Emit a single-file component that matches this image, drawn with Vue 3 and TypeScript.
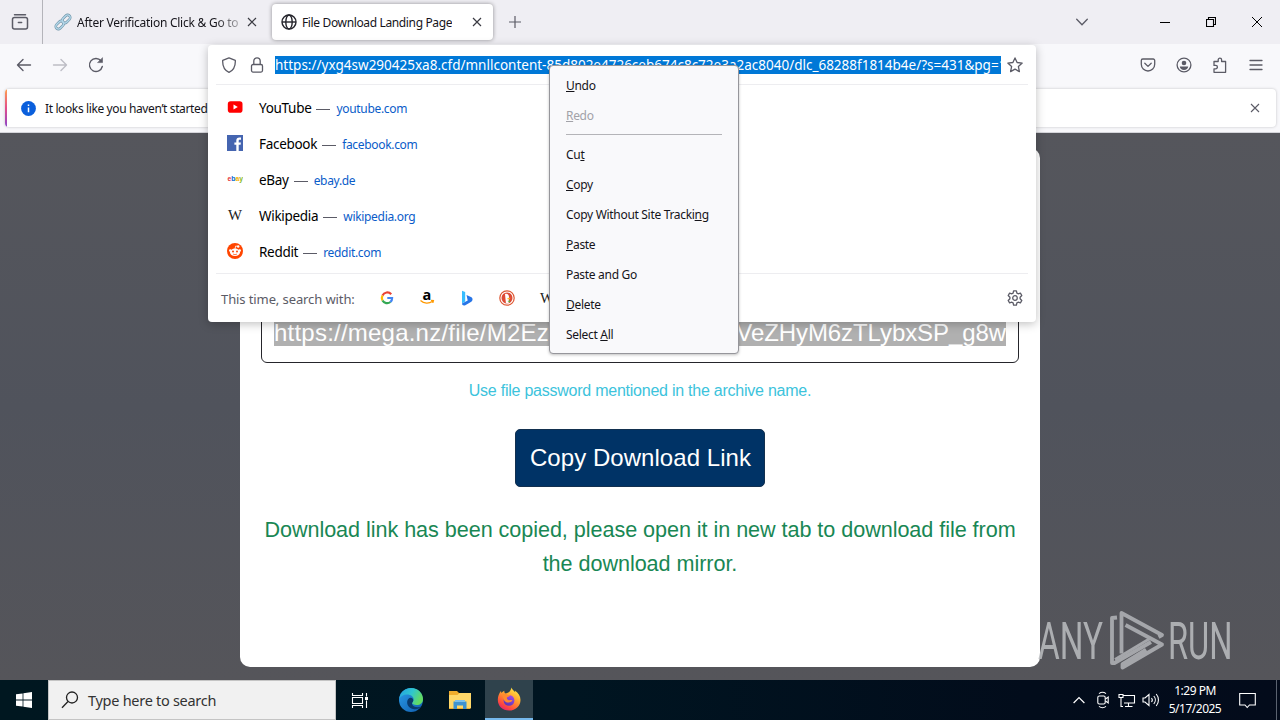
<script setup lang="ts">
interface Site {
  id: string
  name: string
  host: string
}

interface MenuEntry {
  before: string
  key: string
  after: string
  disabled?: boolean
  divider?: boolean
}

const sites: Site[] = [
  { id: 'youtube', name: 'YouTube', host: 'youtube.com' },
  { id: 'facebook', name: 'Facebook', host: 'facebook.com' },
  { id: 'ebay', name: 'eBay', host: 'ebay.de' },
  { id: 'wikipedia', name: 'Wikipedia', host: 'wikipedia.org' },
  { id: 'reddit', name: 'Reddit', host: 'reddit.com' },
]

const menu: MenuEntry[] = [
  { before: '', key: 'U', after: 'ndo' },
  { before: '', key: 'R', after: 'edo', disabled: true, divider: true },
  { before: 'Cu', key: 't', after: '' },
  { before: '', key: 'C', after: 'opy' },
  { before: 'Copy Without Site Tracki', key: 'n', after: 'g' },
  { before: '', key: 'P', after: 'aste' },
  { before: 'Paste and Go', key: '', after: '' },
  { before: '', key: 'D', after: 'elete' },
  { before: 'Select ', key: 'A', after: 'll' },
]
</script>

<template>
  <div class="screen">
    <header class="tabs">
      <div class="view">
        <svg width="18" height="18" viewBox="0 0 18 18" fill="none" stroke="#5b5b66" stroke-width="1.5" stroke-linecap="round">
          <path d="M3.500 1.700h11" /><rect x="1.500" y="4.500" width="15" height="11.500" rx="2" /><path d="M7.400 9.500h3.200" />
        </svg>
      </div>
      <div class="tab first">
        <svg class="chain" width="18" height="18" viewBox="0 0 18 18" fill="none" stroke-linecap="round">
          <g stroke="#6f94a8" stroke-width="2.6"><rect x="-4.6" y="-2.6" width="9.2" height="5.2" rx="2.6" transform="translate(5.8 12) rotate(-45)" /><rect x="-4.6" y="-2.6" width="9.2" height="5.2" rx="2.6" transform="translate(12.2 6) rotate(-45)" /></g>
          <g stroke="#b4d8ea" stroke-width="1.3"><rect x="-4.6" y="-2.6" width="9.2" height="5.2" rx="2.6" transform="translate(5.8 12) rotate(-45)" /><rect x="-4.6" y="-2.6" width="9.2" height="5.2" rx="2.6" transform="translate(12.2 6) rotate(-45)" /></g>
        </svg>
        <span class="title faded">After Verification Click &amp; Go to</span>
        <svg class="x" width="10" height="10" viewBox="0 0 10 10" stroke="#3b3b43" stroke-width="1.2"><path d="M1 1l8 8M9 1L1 9" /></svg>
      </div>
      <div class="tab active">
        <svg width="16" height="16" viewBox="0 0 16 16" fill="none" stroke="#25252c" stroke-width="1.4"><circle cx="8" cy="8" r="7" /><ellipse cx="8" cy="8" rx="3.2" ry="7" /><path d="M1 8h14" /></svg>
        <span class="title">File Download Landing Page</span>
        <svg class="x" width="10" height="10" viewBox="0 0 10 10" stroke="#3b3b43" stroke-width="1.2"><path d="M1 1l8 8M9 1L1 9" /></svg>
      </div>
      <svg class="plus" width="12" height="12" viewBox="0 0 12 12" stroke="#5b5b66" stroke-width="1.2"><path d="M6 0v12M0 6h12" /></svg>
      <div class="window">
        <svg width="12" height="12" viewBox="0 0 12 12" fill="none" stroke="#5b5b66" stroke-width="1.3" stroke-linecap="round"><path d="M.7 3.2L6 8.7l5.3-5.5" /></svg>
        <svg width="10" height="10" viewBox="0 0 10 10" stroke="#000"><path d="M0 5.5h10" /></svg>
        <svg width="10" height="10" viewBox="0 0 10 10" fill="none" stroke="#000" stroke-width="1.1"><path d="M.5 2.5h7v7h-7zM2.5 2.5v-2h7v7h-2" /></svg>
        <svg width="10" height="10" viewBox="0 0 10 10" stroke="#000" stroke-width="1"><path d="M0 0l10 10M10 0L0 10" /></svg>
      </div>
    </header>

    <nav class="toolbar">
      <div class="nav-left">
        <svg width="16" height="14" viewBox="0 0 16 14" fill="none" stroke="#5b5b66" stroke-width="1.4" stroke-linecap="round" stroke-linejoin="round"><path d="M7 1.5L1.5 7 7 12.500M1.500 7H14.500" /></svg>
        <svg width="16" height="14" viewBox="0 0 16 14" fill="none" stroke="#bdbdc5" stroke-width="1.4" stroke-linecap="round" stroke-linejoin="round"><path d="M9 1.500L14.500 7 9 12.500M14.500 7H1.500" /></svg>
        <svg width="16" height="16" viewBox="0 0 16 16" fill="none" stroke="#5b5b66" stroke-width="1.4" stroke-linecap="round" stroke-linejoin="round"><path d="M14.300 9.500A6.500 6.500 0 1 1 13 3.800" /><path d="M14.500 1v4.600H9.900z" fill="#5b5b66" stroke-width=".6" /></svg>
      </div>
      <div class="nav-right">
        <svg width="16" height="16" viewBox="0 0 16 16" fill="none" stroke="#5b5b66" stroke-width="1.300" stroke-linecap="round" stroke-linejoin="round"><path d="M2.800 2h10.400a1.500 1.500 0 0 1 1.500 1.500V7.300a6.700 6.700 0 0 1-13.400 0V3.500A1.500 1.500 0 0 1 2.800 2z" /><path d="M4.800 6.300L8 9.400l3.200-3.100" /></svg>
        <svg width="16" height="16" viewBox="0 0 16 16" fill="none" stroke="#5b5b66" stroke-width="1.300"><circle cx="8" cy="8" r="6.900" /><g fill="#5b5b66" stroke="none"><circle cx="8" cy="6" r="2.300" /><path d="M3.800 9.500h8.400c-.2 2.200-2 3.400-4.200 3.400s-4-1.200-4.200-3.400z" /></g></svg>
        <svg width="16" height="16" viewBox="0 0 16 16" fill="none" stroke="#5b5b66" stroke-width="1.300" stroke-linejoin="round"><path d="M2 6.500V4.500H6.200V2.800a1.700 1.700 0 0 1 3.400 0v1.700H13.600v10.800H2V11.800h1.700a1.700 1.700 0 0 0 0-3.400H2z" /></svg>
        <svg width="14" height="12" viewBox="0 0 14 12" stroke="#5b5b66" stroke-width="1.300" stroke-linecap="round"><path d="M1 1.500h12M1 6h12M1 10.500h12" /></svg>
      </div>
    </nav>

    <div class="notice-strip">
      <div class="notice">
        <i class="accent"></i>
        <svg width="15" height="15" viewBox="0 0 15 15"><circle cx="7.500" cy="7.500" r="7.400" fill="#0a5fdc" /><path d="M7.500 6.500v4.700M7.500 3.500v1.600" stroke="#fff" stroke-width="1.500" /></svg>
        <span class="notice-text">It looks like you haven’t started</span>
        <svg class="dismiss" width="10" height="10" viewBox="0 0 10 10" stroke="#5b5b66" stroke-width="1.100"><path d="M1 1l8 8M9 1L1 9" /></svg>
      </div>
    </div>

    <main class="page">
      <section class="card">
        <div class="link-box">
          <div class="selected"><span class="head">https://mega.nz/file/M2Ezx</span><span class="tail">VeZHyM6zTLybxSP_g8w</span></div>
        </div>
        <p class="hint">Use file password mentioned in the archive name.</p>
        <button class="copy">Copy Download Link</button>
        <p class="success">Download link has been copied, please open it in new tab to download file from<br>the download mirror.</p>
      </section>
    </main>

    <footer class="taskbar">
      <div class="start">
        <svg width="16" height="16" viewBox="0 0 16 16" fill="#fff"><path d="M0 2.300l6.600-.9v6.200H0zM7.400 1.300L16 0v7.600H7.400zM0 8.400h6.600v6.200L0 13.700zM7.400 8.400H16V16l-8.600-1.300z" /></svg>
      </div>
      <div class="search">
        <svg width="18" height="18" viewBox="0 0 18 18" fill="none" stroke="#222" stroke-width="1.300"><circle cx="11" cy="6.500" r="5.500" /><path d="M7 10.500L1 16.800" /></svg>
        <span>Type here to search</span>
      </div>
      <div class="app">
        <svg width="18" height="17" viewBox="0 0 18 17" fill="none" stroke="#fff" stroke-width="1.100"><path d="M1.500 1v2.500h10V1M1.500 16v-2.500h10V16M1.500 5.500h10v6h-10zM15.500 1v3.500M15.500 8.500V16" /><path d="M14 5h3v3h-3z" fill="#fff" stroke="none" /></svg>
      </div>
      <div class="app edge">
        <svg width="26" height="26" viewBox="0 0 26 26">
          <defs>
            <linearGradient id="edgeTop" x1="0" y1="0" x2="1" y2=".4"><stop offset="0" stop-color="#239fe3" /><stop offset=".55" stop-color="#2fc6cf" /><stop offset="1" stop-color="#62db62" /></linearGradient>
            <linearGradient id="edgeLow" x1="0" y1="0" x2="1" y2="1"><stop offset="0" stop-color="#2b9de9" /><stop offset="1" stop-color="#0f5cae" /></linearGradient>
          </defs>
          <circle cx="13" cy="13" r="12" fill="url(#edgeLow)" />
          <path d="M1.200 11.500C2.500 4.500 7.500 1 13 1c7.500 0 12 5.600 12 11 0 4-3 6-6.300 6-3 0-4.700-1-4.700-2.200 0-.9 1.600-1.300 1.600-3.600 0-2.400-2.600-4.700-6.600-4.700-3.600 0-6.300 1.700-7.800 4z" fill="url(#edgeTop)" />
          <path d="M10.500 11.800c-3 3.200-1 10 5.800 10.500 3.200.2 5.500-1 7-2.700-4 1.600-8.300.3-9.300-2.600-.4-1.200 1-1.800 1.300-3.600.2-1.800-2.600-3.900-4.800-1.600z" fill="#093a6d" />
        </svg>
      </div>
      <div class="app">
        <svg width="22" height="20" viewBox="0 0 22 20"><path d="M0 1h8l2 2h11.500v16H0z" fill="#f0ad2d" /><path d="M0 5h8.500L10.500 3H22v15H0z" fill="#ffd869" /><path d="M4.500 19v-7.500h13V19h-3.500v-3.500H8V19z" fill="#3f93d0" /><path d="M6 10h10v2H6z" fill="#7ec1ea" /></svg>
      </div>
      <div class="app current">
        <svg width="24" height="24" viewBox="0 0 24 24">
          <defs>
            <linearGradient id="foxFire" x1=".8" y1="0" x2=".2" y2="1"><stop offset="0" stop-color="#fff04a" /><stop offset=".4" stop-color="#ffa22e" /><stop offset=".75" stop-color="#ff503b" /><stop offset="1" stop-color="#e31b72" /></linearGradient>
            <linearGradient id="foxGlobe" x1=".8" y1="0" x2=".3" y2="1"><stop offset="0" stop-color="#a64be8" /><stop offset="1" stop-color="#5737b5" /></linearGradient>
          </defs>
          <path d="M14.600.5c.6 2.300 2 3 3.600 4.800 0-.7-.2-1.200-.4-1.700C21.500 6 23.500 9.500 23.500 13c0 6-5 10.600-11.400 10.600C5.500 23.600.8 19 .8 12.800c0-3.800 1.300-6.600 3.200-8.900.1 1 .3 1.600.7 2.200.5-.9 1.500-1.900 2.600-2.300-.1 1 .2 1.900.8 2.600 2 0 3.500-.9 4.500-1.900.8-.9 1.500-2.500 2-4z" fill="url(#foxFire)" />
          <circle cx="12" cy="13.400" r="5.400" fill="url(#foxGlobe)" />
          <path d="M4.500 7.500c2-1.500 4.500-1 6.200.6h2.600c-.3 1.500-2.500 1.700-3.200 2.300-.5.500-.2 2 1.200 2.600 1.600.6 2.800-.4 4.200.3-1.200 2.200-4.600 3-7 1.400C6 13.200 7 10 4.500 7.500z" fill="#ff8b2f" />
        </svg>
      </div>
      <div class="tray">
        <svg width="12" height="8" viewBox="0 0 12 8" fill="none" stroke="#fff" stroke-width="1.200"><path d="M.6 7L6 1.500 11.400 7" /></svg>
        <svg class="meet" width="14" height="18" viewBox="0 0 14 18" fill="none" stroke="#fff" stroke-width="1.100"><rect x="1.800" y="5" width="7.400" height="8" rx="1.500" /><path d="M9.500 8l2.700-2v6L9.500 10M3 2.600c2-1.500 5-1.500 7 0M3 15.400c2 1.500 5 1.500 7 0" /></svg>
        <svg class="net" width="18" height="15" viewBox="0 0 18 15" fill="none" stroke="#fff" stroke-width="1.100"><path d="M5.500 2.500h11v7.500H6M10.500 10v3M7 13.500h7.500M1 1.500h4v3H1zM3 4.500v9h2" /></svg>
        <svg class="sound" width="18" height="14" viewBox="0 0 18 14" fill="none" stroke="#fff" stroke-width="1.100"><path d="M1 5h2l4-3.500v11L3 9H1zM9.500 5c1 1.200 1 2.800 0 4M11.800 3c2 2.300 2 5.700 0 8M14.200 1c3 3.500 3 8.500 0 12" /></svg>
        <div class="clock"><span>1:29 PM</span><span>5/17/2025</span></div>
        <svg width="17" height="17" viewBox="0 0 17 17" fill="none" stroke="#fff" stroke-width="1.100"><path d="M.7 1.500h15.600v11.500H10.500L8.200 15.500 6 13H.7z" /></svg>
      </div>
      <i class="peek"></i>
    </footer>

    <svg class="watermark" width="200" height="64" viewBox="0 0 200 64">
      <g fill="#bcbec1" font-family="Roboto" font-size="52">
        <text x="2" y="50" textLength="65" lengthAdjust="spacingAndGlyphs">ANY</text>
        <text x="132" y="50" textLength="64.500" lengthAdjust="spacingAndGlyphs">RUN</text>
      </g>
      <g fill="none" stroke="#b3b5b9" stroke-width="3.800" stroke-linejoin="round" transform="translate(2 -.5)">
        <path d="M79 9l-5 .5v45h2.500L113 33.500" /><path d="M83.500 45V4.500L124 26.500l-3.500 2" /><path d="M87.500 16.500L124 36 84.500 59v-3.500L108 41" /><path d="M77 51l35-21" stroke-width="2.800" />
      </g>
    </svg>

    <section class="urlbar">
      <div class="address">
        <svg class="shield" width="16" height="16" viewBox="0 0 16 16" fill="none" stroke="#5b5b66" stroke-width="1.300" stroke-linejoin="round"><path d="M8 .8l6.300 2.600c.3 5.600-1.700 10-6.300 12C3.400 13.400 1.400 9 1.700 3.400z" /></svg>
        <svg class="lock" width="14" height="16" viewBox="0 0 14 16" fill="none" stroke="#5b5b66" stroke-width="1.300"><rect x="1.500" y="7.500" width="11" height="7.600" rx="1.500" /><path d="M3.800 7.500V4a3.200 3.200 0 0 1 6.400 0v3.500" /></svg>
        <div class="url"><span>https://yxg4sw290425xa8.cfd/mnllcontent-85d802e4726ceb674c8c72e3a2ac8040/dlc_68288f1814b4e/?s=431&amp;pg=1</span></div>
        <svg class="star" width="16" height="16" viewBox="0 0 16 16" fill="none" stroke="#5b5b66" stroke-width="1.300" stroke-linejoin="round"><path d="M8 .9l2.100 4.600 5.100.6-3.800 3.500 1 5L8 12.100l-4.400 2.500 1-5L.8 6.100l5.100-.6z" /></svg>
      </div>
      <ul class="sites">
        <li v-for="site in sites" :key="site.id">
          <svg width="16" height="16" viewBox="0 0 16 16">
            <template v-if="site.id === 'youtube'"><rect x=".8" y="2.200" width="14.700" height="11.500" rx="2.800" fill="#f00" /><path d="M6.500 5.400l4.300 2.500-4.300 2.500z" fill="#fff" /></template>
            <template v-else-if="site.id === 'facebook'"><path d="M0 0h16v16H0z" fill="#4565b0" /><path d="M9.300 16V9.800H7.400V7.400h1.900V5.600c0-2 1.200-3.100 3.100-3.100H14v2.200h-1.200c-.9 0-1.100.5-1.100 1.200v1.500h2.200l-.3 2.400h-1.900V16z" fill="#fff" /></template>
            <text v-else-if="site.id === 'ebay'" x="0.500" y="10" font-family="Liberation Sans" font-weight="700" font-size="7.500" textLength="15.500" lengthAdjust="spacingAndGlyphs"><tspan fill="#e53238">e</tspan><tspan fill="#0064d2">b</tspan><tspan fill="#f5af02">a</tspan><tspan fill="#86b817">y</tspan></text>
            <text v-else-if="site.id === 'wikipedia'" x="1" y="12.500" font-family="Liberation Serif" font-size="14" textLength="14" lengthAdjust="spacingAndGlyphs" fill="#222">W</text>
            <template v-else><circle cx="8" cy="8" r="8" fill="#ff4500" /><ellipse cx="8" cy="9.300" rx="5" ry="3.700" fill="#fff" /><circle cx="3.300" cy="7.500" r="1.300" fill="#fff" /><circle cx="12.700" cy="7.500" r="1.300" fill="#fff" /><circle cx="11.200" cy="3.500" r="1.200" fill="#fff" /><path d="M8 6l.7-3 2.400.5" fill="none" stroke="#fff" stroke-width=".8" /><circle cx="6" cy="8.600" r="1" fill="#ff4500" /><circle cx="10" cy="8.600" r="1" fill="#ff4500" /><path d="M6 11c1.200.8 2.800.8 4 0" fill="none" stroke="#ff4500" stroke-width=".7" /></template>
          </svg>
          <span class="name">{{ site.name }}</span><i class="dash"></i><span class="host">{{ site.host }}</span>
        </li>
      </ul>
      <div class="engines">
        <span class="label">This time, search with:</span>
        <svg class="engine" width="16" height="16" viewBox="0 0 16 16" fill="none" stroke-width="2.200"><path d="M12.200 4.300A5.200 5.200 0 0 0 3.500 5.500" stroke="#ea4335" /><path d="M3.500 5.500a5.200 5.200 0 0 0 0 5" stroke="#fbbc05" /><path d="M3.500 10.500a5.200 5.200 0 0 0 7.900 1.500" stroke="#34a853" /><path d="M11.400 12a5.200 5.200 0 0 0 1.700-4H8.300" stroke="#4285f4" /></svg>
        <svg class="engine" width="16" height="16" viewBox="0 0 16 16"><text x="3.500" y="10" font-family="Open Sans" font-weight="700" font-size="14.500">a</text><path d="M1.500 10.500c3.500 3.300 8.500 3.300 12 .8M12 10.300l2.400.2-.6 2.300" fill="none" stroke="#f90" stroke-width="1.300" /></svg>
        <svg class="engine" width="16" height="16" viewBox="0 0 16 16"><path d="M3 .8l3.200 1.300v9.400L3 13.500z" fill="#37bdff" /><path d="M7.500 5l5 2.300c1.500.8 1.400 3.400-.2 4.500l-6 3.400c-2 .8-3.300-.3-3.300-1.700l5.700-3z" fill="#2775e7" /></svg>
        <svg class="engine" width="16" height="16" viewBox="0 0 16 16"><circle cx="8" cy="8" r="7.200" fill="#fff" stroke="#de5833" stroke-width="1.200" /><circle cx="8" cy="8" r="5.500" fill="#de4b35" /><path d="M6 4c2-1 4 .3 4 3l-.4 6c-1 .4-2 .4-2.700 0z" fill="#fff" /><path d="M8.500 8l3-.3-1 1.500H8.500z" fill="#fdbb20" /><path d="M8.500 11l2.500-.6v2z" fill="#4cba3c" /></svg>
        <svg class="engine" width="16" height="16" viewBox="0 0 16 16"><text x="1" y="12.500" font-family="Liberation Serif" font-size="14" textLength="14" lengthAdjust="spacingAndGlyphs" fill="#222">W</text></svg>
        <svg class="gear" width="16" height="16" viewBox="0 0 16 16" fill="none" stroke="#5b5b66" stroke-width="1.300" stroke-linejoin="round"><path d="M6.600.8h2.800l.5 2.300 1.200.7 2.300-.7 1.400 2.400-1.700 1.700v1.600l1.700 1.700-1.400 2.400-2.300-.7-1.200.7-.5 2.300H6.600l-.5-2.300-1.200-.7-2.300.7-1.400-2.400 1.700-1.700V7.200L1.200 5.500l1.400-2.400 2.300.7 1.200-.7z" /><circle cx="8" cy="8" r="2.300" /></svg>
      </div>
    </section>

    <ul class="menu">
      <template v-for="(entry, i) in menu" :key="i">
        <li :class="{ disabled: entry.disabled }">{{ entry.before }}<u>{{ entry.key }}</u>{{ entry.after }}</li>
        <li v-if="entry.divider" class="divider"></li>
      </template>
    </ul>
  </div>
</template>

<style>
body {
  margin: 0;
}
</style>

<style scoped>
* {
  box-sizing: border-box;
}
svg {
  display: block;
  flex: none;
}
ul {
  list-style: none;
  margin: 0;
  padding: 0;
}
.screen {
  position: relative;
  width: 1280px;
  height: 720px;
  overflow: hidden;
  display: flex;
  flex-direction: column;
  font: 12px/18px "Noto Sans", "Open Sans", sans-serif;
  color: #15141a;
  white-space: nowrap;
}
.tabs {
  height: 44px;
  flex: none;
  display: flex;
  align-items: center;
  background: #efeef3;
}
.view {
  width: 43px;
  height: 44px;
  padding: 13px 0 0 11px;
  border-right: 1px solid #b4b4ba;
}
.tab {
  display: flex;
  align-items: center;
  height: 36px;
}
.tab .title {
  padding-top: 2px;
  letter-spacing: -0.36px;
  overflow: hidden;
}
.tab .x {
  margin-left: auto;
}
.first {
  width: 229px;
  padding: 0 15px 0 11px;
}
.first .title {
  width: 163px;
  margin-left: 5px;
  letter-spacing: -0.25px;
}
.faded {
  mask-image: linear-gradient(to right, #000 138px, transparent 172px);
}
.active {
  width: 221px;
  padding: 0 11px 0 9px;
  background: #fff;
  border-radius: 4px;
  box-shadow: 0 0 4px rgba(0, 0, 0, 0.4);
}
.active .title {
  margin-left: 5px;
}
.plus {
  margin-left: 16px;
}
.window {
  display: flex;
  align-items: center;
  margin-left: auto;
  padding-right: 18px;
}
.window svg + svg {
  margin-left: 36px;
}
.window svg:nth-child(2) {
  margin-left: 72px;
}
.toolbar {
  height: 44px;
  flex: none;
  display: flex;
  align-items: center;
  justify-content: space-between;
  padding: 0 17px 3px 16px;
  background: #f8f8fb;
}
.nav-left,
.nav-right {
  display: flex;
  align-items: center;
  gap: 20px;
}
.nav-right svg:last-child {
  margin-left: 1px;
}
.notice-strip {
  height: 45px;
  flex: none;
  padding: 1px 4px 5px 5px;
  background: #f8f8fb;
  border-bottom: 1px solid #d5d5da;
}
.notice {
  height: 38px;
  display: flex;
  align-items: center;
  background: #fff;
  border-radius: 4px;
  overflow: hidden;
  box-shadow: 0 0 3px rgba(0, 0, 0, 0.22);
}
.accent {
  width: 2px;
  height: 38px;
  margin-right: 14px;
  background: linear-gradient(#ffa04d, #e34d8b 50%, #8b45c8);
}
.notice-text {
  margin-left: 9px;
  padding-top: 2px;
  letter-spacing: -0.38px;
}
.dismiss {
  margin: 0 16px 0 auto;
}
.page {
  flex: 1;
  padding: 15px 240px 13px;
  background: linear-gradient(#55565c, #50535c 50%, #55555a);
}
.card {
  height: 519px;
  border-radius: 10px;
  background: #fff;
  display: flex;
  flex-direction: column;
  align-items: center;
  padding-top: 155px;
  font-family: "Liberation Sans", Arial, sans-serif;
}
.link-box {
  width: 758px;
  height: 60px;
  padding: 15px 12px;
  border: 1px solid #25252b;
  border-radius: 6px;
}
.selected {
  height: 27px;
  display: flex;
  justify-content: space-between;
  background: #b0b0b0;
  color: #fff;
  font-size: 24px;
  line-height: 27px;
}
.head {
  letter-spacing: 0.22px;
}
.tail {
  letter-spacing: -0.08px;
}
.hint {
  margin: 18px 0 0;
  font-size: 16px;
  line-height: 20px;
  letter-spacing: -0.24px;
  color: #3cc3dc;
}
.copy {
  width: 250px;
  height: 58px;
  margin: 28px 0 0;
  padding: 0 0 0 1px;
  border: 1px solid #12304f;
  border-radius: 5px;
  background: #003366;
  color: #fff;
  font: 24px/56px "Liberation Sans", Arial, sans-serif;
  letter-spacing: 0.05px;
}
.success {
  margin: 26px 0 0;
  font-size: 21.6px;
  line-height: 34px;
  letter-spacing: -0.05px;
  text-align: center;
  color: #198754;
}
.taskbar {
  height: 40px;
  flex: none;
  display: flex;
  background: linear-gradient(to right, #001720 0%, #001521 45%, #020c1b 80%, #030b1b);
  color: #fff;
}
.start {
  width: 48px;
  padding: 12px 16px;
}
.search {
  width: 288px;
  display: flex;
  align-items: center;
  padding-left: 12px;
  border: 1px solid #c4c4c4;
  background: #f1f1f1;
  color: #333;
  font-size: 14.5px;
  letter-spacing: -0.28px;
}
.search span {
  margin-left: 9px;
}
.app {
  width: 48px;
  margin-right: 2px;
  display: flex;
  align-items: center;
  justify-content: center;
}
.app.edge {
  padding-left: 2px;
}
.app.current {
  margin-left: -1px;
  background: #2f424c;
  border-bottom: 2px solid #76b9ed;
}
.tray {
  display: flex;
  align-items: center;
  margin-left: auto;
  margin-right: 20px;
}
.meet {
  margin-left: 11px;
}
.net {
  margin-left: 8px;
}
.sound {
  margin-left: 6px;
}
.clock {
  width: 70px;
  margin: 0 9px 0 0;
  display: flex;
  flex-direction: column;
  align-items: center;
  font-size: 12px;
  letter-spacing: -0.5px;
}
.peek {
  width: 4px;
  border-left: 1px solid #5a6270;
}
.watermark {
  position: absolute;
  left: 1036px;
  top: 609px;
  opacity: 0.85;
}
.urlbar {
  position: absolute;
  left: 208px;
  top: 45px;
  width: 828px;
  height: 277px;
  padding: 0 8px;
  background: #fff;
  border-radius: 4px;
  box-shadow: 0 2px 10px rgba(0, 0, 0, 0.25);
}
.address {
  height: 40px;
  display: flex;
  align-items: center;
  padding: 0 5px;
  border-bottom: 1px solid #ededf0;
}
.lock {
  margin-left: 13px;
}
.url {
  width: 726px;
  height: 18px;
  margin-left: 11px;
  overflow: hidden;
  background: #0078d7;
  color: #fff;
  font-size: 13.5px;
}
.star {
  margin-left: 6px;
}
.sites {
  height: 188px;
  padding-top: 5px;
}
.sites li {
  height: 36px;
  display: flex;
  align-items: center;
  padding-left: 11px;
}
.sites svg {
  position: relative;
  top: -1px;
}
.name {
  margin-left: 16px;
  font-size: 13.5px;
  letter-spacing: -0.3px;
  color: #000;
}
.dash {
  width: 14px;
  height: 1px;
  margin: 3px 6px 0 5px;
  background: #5b5b66;
}
.host {
  padding-top: 2px;
  color: #0a5cc9;
  font-size: 12px;
  letter-spacing: -0.32px;
}
.engines {
  height: 49px;
  display: flex;
  align-items: center;
  padding: 0 5px;
  border-top: 1px solid #ededf0;
}
.label {
  width: 134px;
  padding-top: 2px;
  color: #5b5b66;
  font-size: 13px;
  letter-spacing: -0.1px;
  margin-right: 24px;
}
.engine {
  margin-right: 24px;
}
.gear {
  margin-left: auto;
}
.menu {
  position: absolute;
  left: 549px;
  top: 65px;
  width: 190px;
  height: 289px;
  padding: 5px 16px;
  background: #f9f9fb;
  border: 1px solid #96969b;
  border-radius: 4px;
  box-shadow: 0 1px 3px rgba(0, 0, 0, 0.25);
  letter-spacing: -0.31px;
}
.menu li {
  height: 30px;
  line-height: 30px;
}
.menu u {
  text-underline-offset: 1px;
}
.menu .disabled {
  color: #a2a2a8;
}
.menu .divider {
  height: 1px;
  margin: 3px 0 5px;
  background: #b4b4b8;
}
</style>
